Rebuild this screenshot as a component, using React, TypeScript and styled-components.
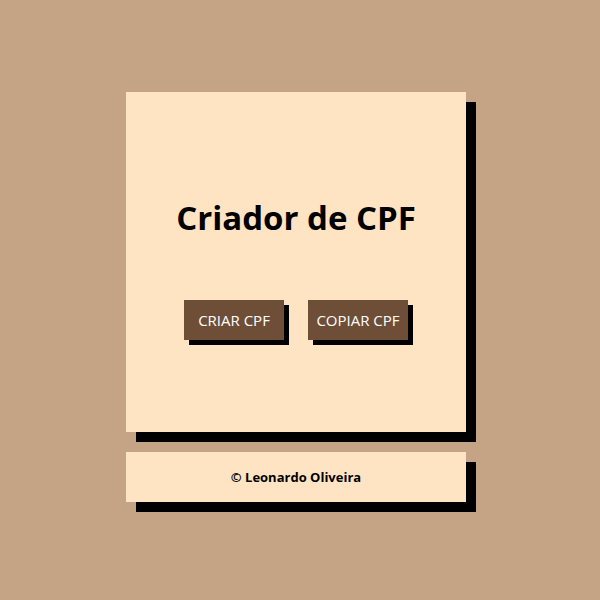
import React from "react";
import styled, { createGlobalStyle } from "styled-components";

const Global = createGlobalStyle`
  html, body { margin: 0; padding: 0; background: #c4a484; }
  body { font-family: "Open Sans", "Noto Sans", sans-serif; }
`;

const Page = styled.div`
  width: 600px;
  height: 600px;
  box-sizing: border-box;
  padding: 92px 0 0 126px;
  display: flex;
  flex-direction: column;
  gap: 20px;
`;

const Card = styled.div<{ $h: number }>`
  width: 340px;
  height: ${(p) => p.$h}px;
  background: #ffe4c4;
  box-shadow: 10px 10px 0 #000;
  display: flex;
  flex-direction: column;
  align-items: center;
`;

const Title = styled.h1`
  margin: 104px 0 0;
  font-size: 33px;
  line-height: 44px;
  font-weight: 700;
  color: #000;
`;

const Buttons = styled.div`
  display: flex;
  gap: 24px;
  margin-top: 60px;
`;

const Button = styled.button`
  width: 100px;
  height: 40px;
  border: none;
  padding: 0;
  background: #6f4e37;
  color: #fff;
  font-family: inherit;
  font-size: 15px;
  box-shadow: 5px 5px 0 #000;
  cursor: pointer;
`;

const Footer = styled.p`
  margin: 0;
  line-height: 50px;
  font-size: 13px;
  font-weight: 700;
  color: #000;
`;

export default function App() {
  return (
    <>
      <Global />
      <Page>
        <Card $h={340}>
          <Title>Criador de CPF</Title>
          <Buttons>
            <Button>CRIAR CPF</Button>
            <Button>COPIAR CPF</Button>
          </Buttons>
        </Card>
        <Card $h={50}>
          <Footer>© Leonardo Oliveira</Footer>
        </Card>
      </Page>
    </>
  );
}
